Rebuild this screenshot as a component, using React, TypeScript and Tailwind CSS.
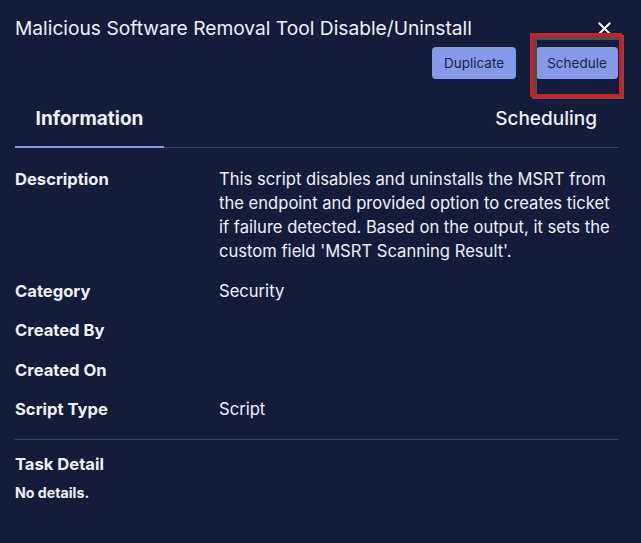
import { X } from 'lucide-react'

const rows = [
  {
    label: 'Description',
    value:
      "This script disables and uninstalls the MSRT from the endpoint and provided option to creates ticket if failure detected. Based on the output, it sets the custom field 'MSRT Scanning Result'.",
  },
  { label: 'Category', value: 'Security' },
  { label: 'Created By', value: '' },
  { label: 'Created On', value: '' },
  { label: 'Script Type', value: 'Script' },
]

export default function App() {
  return (
    <div className="w-[641px] h-[543px] bg-[#151c3a] text-[#eef0f6] font-['Inter',sans-serif] overflow-hidden">
      <div className="pl-[15px] pr-[22px] pt-[16px]">
        <div className="flex items-center justify-between">
          <h1 className="text-[19.2px] leading-[24px] font-normal">
            Malicious Software Removal Tool Disable/Uninstall
          </h1>
          <X className="w-[21px] h-[21px] mr-[4px] text-white" strokeWidth={2.2} />
        </div>

        <div className="flex justify-end gap-[20px] mt-[7px] mr-px">
          <button className="h-[32px] w-[84px] rounded-[4px] bg-[#8698e8] text-[#1d2347] text-[13.5px]">
            Duplicate
          </button>
          <div className="relative">
            <button className="h-[32px] w-[82px] rounded-[4px] bg-[#8698e8] text-[#1d2347] text-[13.5px]">
              Schedule
            </button>
            <div className="absolute left-[-6px] top-[-14px] w-[92px] h-[64px] border-[3px] border-[#ee1111] shadow-[2px_2px_0_#555a66,inset_4px_4px_0_#4a4f5c] pointer-events-none" />
          </div>
        </div>

        <div className="flex justify-between mt-[28px] border-b border-[#39426a]">
          <div className="w-[149px] text-center pb-[15px] text-[19px] leading-[24px] font-bold border-b-2 border-[#8698e8] -mb-px">
            Information
          </div>
          <div className="pr-[22px] pb-[15px] text-[19px] leading-[24px] font-medium">
            Scheduling
          </div>
        </div>

        <div className="pt-[19px] pb-[18px] border-b border-[#39426a] flex flex-col gap-[15.5px]">
          {rows.map((r) => (
            <div key={r.label} className="grid grid-cols-[204px_1fr] text-[16.6px] leading-[24px]">
              <div className="font-bold">{r.label}</div>
              <div className="min-h-[24px]">{r.value}</div>
            </div>
          ))}
        </div>

        <div className="pt-[12px]">
          <div className="text-[16.6px] leading-[24px] font-bold">Task Detail</div>
          <div className="text-[14.2px] leading-[20px] font-bold mt-[7px]">No details.</div>
        </div>
      </div>
    </div>
  )
}
